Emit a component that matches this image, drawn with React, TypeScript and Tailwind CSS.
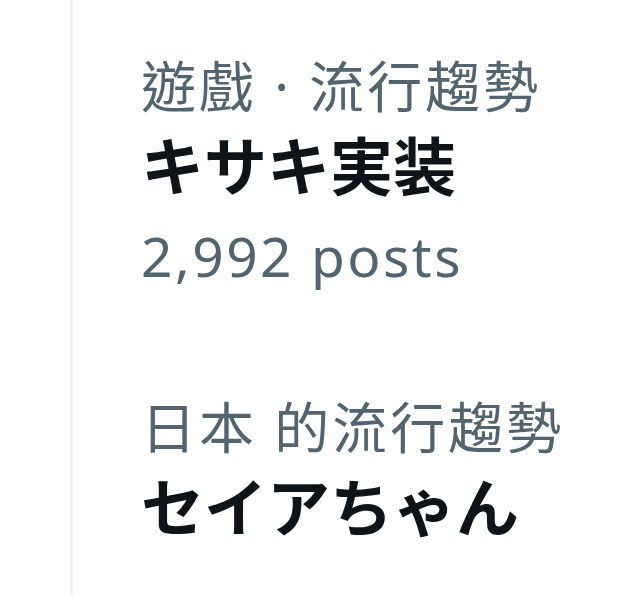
import React from 'react';

const trends = [
  { category: '遊戲 · 流行趨勢', name: 'キサキ実装', posts: '2,992 posts' },
  { category: '日本 的流行趨勢', name: 'セイアちゃん' },
];

export default function App() {
  return (
    <div className="w-[640px] h-[602px] bg-white overflow-hidden flex">
      <div className="w-[70px] shrink-0" />
      <div className="w-[3px] h-[596px] bg-[#eff3f4] shrink-0" />
      <div className="flex flex-col pl-[68px] pt-[52px] gap-[104px]">
        {trends.map((t) => (
          <div key={t.name} className="flex flex-col">
            <div
              className="text-[55px] leading-[67px] tracking-[3px] text-[#536471] whitespace-nowrap"
              style={{ fontFamily: '"Noto Sans", "Noto Sans CJK TC", sans-serif' }}
            >
              {t.category}
            </div>
            <div
              className="mt-[3px] text-[63px] leading-[82px] font-bold text-[#0f1419] whitespace-nowrap"
              style={{ fontFamily: '"Noto Sans CJK JP", sans-serif' }}
            >
              {t.name}
            </div>
            {t.posts && (
              <div
                className="mt-[18px] text-[55px] leading-[67px] tracking-[2.5px] text-[#536471] whitespace-nowrap"
                style={{ fontFamily: '"Noto Sans", "Noto Sans CJK TC", sans-serif' }}
              >
                {t.posts}
              </div>
            )}
          </div>
        ))}
      </div>
    </div>
  );
}
